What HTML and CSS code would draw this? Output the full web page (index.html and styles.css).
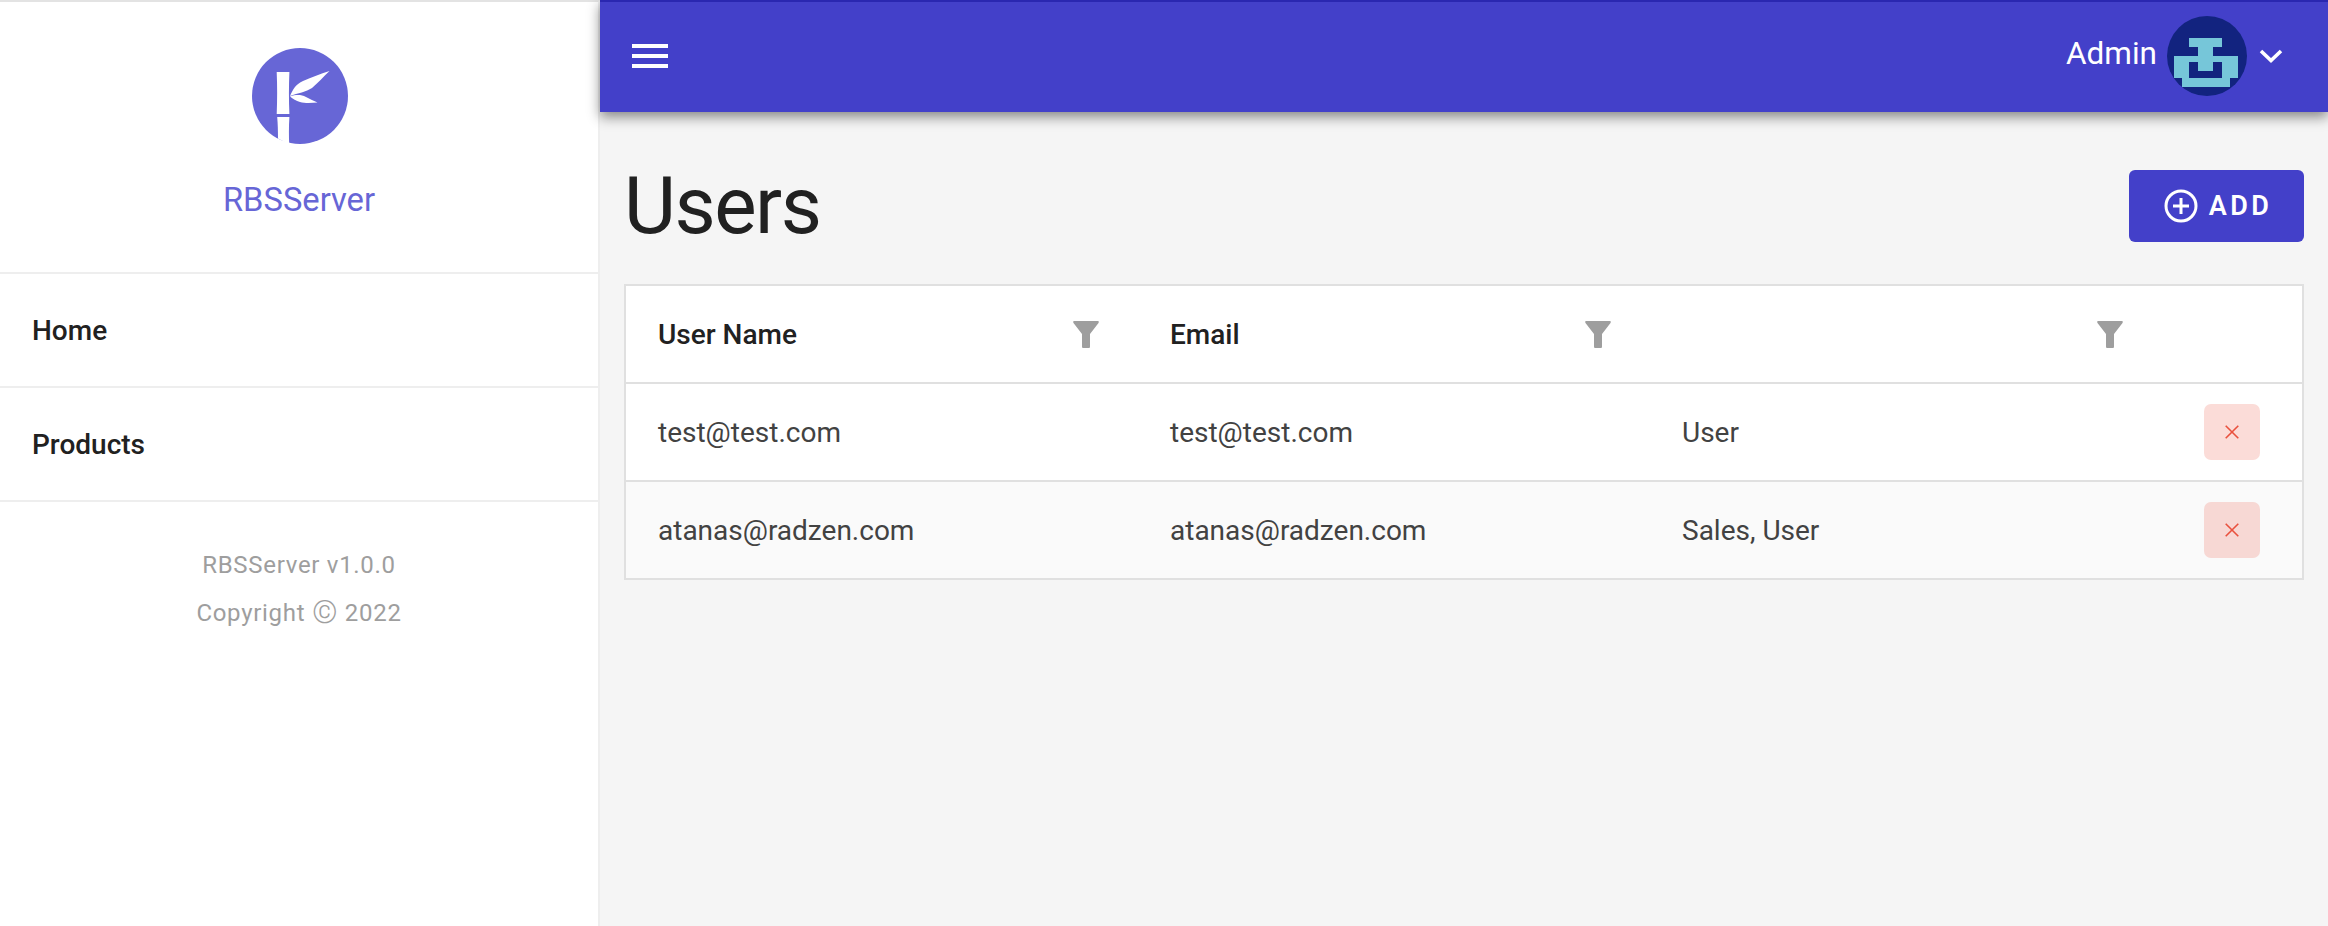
FILE: index.html
```html
<!DOCTYPE html>
<html lang="en">
<head>
    <meta charset="UTF-8">
    <meta name="viewport" content="width=device-width, initial-scale=1.0">
    <title>Users</title>
    <link rel="stylesheet" href="styles.css">
</head>
<body>
    <aside class="sidebar">
        <div class="brand">
            <svg class="brand-logo" viewBox="0 0 96 96" aria-hidden="true">
                <circle cx="48" cy="48" r="48" fill="#6766d6"/>
                <path d="M24.7 24H37.4C36.8 38 36.8 52 37.4 66H24.7C25.3 52 25.3 38 24.7 24Z" fill="#fff"/>
                <path d="M25.2 69H37.4C36.8 78 36.8 87 37.2 96.5L26 90.5C26 83 25.8 76 25.2 69Z" fill="#fff"/>
                <path d="M38 48C41 41 44 36 51 33C60 29 68 26 77.5 23C71 29 66 35 60 40C54 44 46 45 38 48Z" fill="#fff"/>
                <path d="M38 48.5C44 46.5 49 46.5 54 49C58 51 62 53 65.5 54.5C60 55 53 55.5 48 54C44 53 41 51 38 48.5Z" fill="#fff"/>
            </svg>
            <div class="brand-name">RBSServer</div>
        </div>
        <nav>
            <a class="nav-item" href="#">Home</a>
            <a class="nav-item" href="#">Products</a>
        </nav>
        <footer class="sidebar-footer">
            <p>RBSServer v1.0.0</p>
            <p>Copyright <span class="copy">&copy;</span> 2022</p>
        </footer>
    </aside>

    <div class="content">
        <header class="topbar">
            <button class="menu-button" aria-label="Toggle menu">
                <span></span><span></span><span></span>
            </button>
            <div class="profile">
                <span class="profile-name">Admin</span>
                <svg class="avatar" viewBox="0 0 80 80" aria-hidden="true">
                    <circle cx="40" cy="40" r="40" fill="#12237f"/>
                    <path d="M22 22H55V31H46V40H71V62H63V71H15V62H7V40H31V31H22Z" fill="#76c6d9"/>
                    <path d="M22 46H31V55H46V46H55V62H22Z" fill="#12237f"/>
                </svg>
                <svg class="chevron" viewBox="0 0 24 14" aria-hidden="true">
                    <path d="M2 2L12 11.5L22 2" fill="none" stroke="#fff" stroke-width="3.6"/>
                </svg>
            </div>
        </header>

        <main class="page">
            <div class="page-head">
                <h1>Users</h1>
                <button class="add-button">
                    <svg viewBox="0 0 34 34" aria-hidden="true">
                        <circle cx="17" cy="17" r="15" fill="none" stroke="#fff" stroke-width="3"/>
                        <path d="M17 9V25M9 17H25" fill="none" stroke="#fff" stroke-width="3"/>
                    </svg>
                    ADD
                </button>
            </div>

            <table class="grid">
                <thead>
                    <tr>
                        <th><div class="th-inner">User Name<svg class="filter" viewBox="0 0 26 27"><path d="M1 0H25C26 0 26 1 25.5 2L17 13V25.5C17 26.5 16.5 27 15.5 27H10.5C9.5 27 9 26.5 9 25.5V13L.5 2C0 1 0 0 1 0Z"/></svg></div></th>
                        <th><div class="th-inner">Email<svg class="filter" viewBox="0 0 26 27"><path d="M1 0H25C26 0 26 1 25.5 2L17 13V25.5C17 26.5 16.5 27 15.5 27H10.5C9.5 27 9 26.5 9 25.5V13L.5 2C0 1 0 0 1 0Z"/></svg></div></th>
                        <th><div class="th-inner"><svg class="filter" viewBox="0 0 26 27"><path d="M1 0H25C26 0 26 1 25.5 2L17 13V25.5C17 26.5 16.5 27 15.5 27H10.5C9.5 27 9 26.5 9 25.5V13L.5 2C0 1 0 0 1 0Z"/></svg></div></th>
                        <th></th>
                    </tr>
                </thead>
                <tbody>
                    <tr>
                        <td>test@test.com</td>
                        <td>test@test.com</td>
                        <td>User</td>
                        <td class="actions">
                            <button class="delete-button" aria-label="Delete">
                                <svg viewBox="0 0 14 14"><path d="M.7 .7L13.3 13.3M13.3 .7L.7 13.3"/></svg>
                            </button>
                        </td>
                    </tr>
                    <tr class="alt">
                        <td>atanas@radzen.com</td>
                        <td>atanas@radzen.com</td>
                        <td>Sales, User</td>
                        <td class="actions">
                            <button class="delete-button" aria-label="Delete">
                                <svg viewBox="0 0 14 14"><path d="M.7 .7L13.3 13.3M13.3 .7L.7 13.3"/></svg>
                            </button>
                        </td>
                    </tr>
                </tbody>
            </table>
        </main>
    </div>
</body>
</html>
```
FILE: styles.css
```css
* {
    box-sizing: border-box;
}
body {
    margin: 0;
    height: 926px;
    display: flex;
    overflow: hidden;
    font-family: Roboto, "Liberation Sans", sans-serif;
    background-color: #f5f5f5;
    color: #212121;
}
.sidebar {
    width: 600px;
    flex-shrink: 0;
    background-color: #fff;
    border-top: 2px solid #e3e3e3;
    border-right: 2px solid #eeeeee;
}
.brand {
    height: 272px;
    padding-top: 46px;
    display: flex;
    flex-direction: column;
    align-items: center;
    border-bottom: 2px solid #eeeeee;
}
.brand-logo {
    width: 96px;
    height: 96px;
    margin-left: 2px;
}
.brand-name {
    margin-top: 37px;
    font-size: 32.7px;
    line-height: 38px;
    color: #6766d6;
}
.nav-item {
    display: block;
    height: 114px;
    padding-left: 32px;
    line-height: 114px;
    font-size: 28px;
    font-weight: 500;
    color: #212121;
    text-decoration: none;
    border-bottom: 2px solid #eeeeee;
}
.sidebar-footer {
    padding-top: 49px;
    text-align: center;
    font-size: 24px;
    letter-spacing: 0.7px;
    color: #9e9e9e;
}
.sidebar-footer p {
    margin: 0 0 20px;
    line-height: 28px;
}
.copy {
    font-size: 32px;
    font-weight: 300;
    line-height: 0;
    vertical-align: -2px;
}
.content {
    flex: 1;
    display: flex;
    flex-direction: column;
}
.topbar {
    height: 112px;
    padding: 0 45px 2px 32px;
    display: flex;
    align-items: center;
    justify-content: space-between;
    background-color: #4340c9;
    border-top: 2px solid #2a27b0;
    box-shadow: 0 5px 12px rgba(0, 0, 0, 0.45);
    position: relative;
}
.menu-button {
    width: 36px;
    padding: 0;
    border: none;
    background: none;
    display: flex;
    flex-direction: column;
    gap: 6px;
}
.menu-button span {
    height: 4px;
    background-color: #fff;
}
.profile {
    display: flex;
    align-items: center;
    color: #fff;
}
.profile-name {
    font-size: 31.5px;
    margin-right: 10px;
    padding-bottom: 5px;
}
.avatar {
    width: 80px;
    height: 80px;
}
.chevron {
    width: 24px;
    height: 14px;
    margin-left: 12px;
}
.page {
    padding: 0 24px;
}
.page-head {
    height: 172px;
    padding-top: 16px;
    display: flex;
    align-items: center;
    justify-content: space-between;
}
h1 {
    margin: 0;
    font-size: 80px;
    font-weight: 400;
    letter-spacing: -1.5px;
}
.add-button {
    width: 175px;
    height: 72px;
    padding: 0 0 0 3px;
    display: flex;
    align-items: center;
    justify-content: center;
    gap: 11px;
    border: none;
    border-radius: 6px;
    background-color: #4340c9;
    color: #fff;
    font-family: inherit;
    font-size: 27px;
    font-weight: 600;
    letter-spacing: 3.5px;
}
.add-button svg {
    width: 34px;
    height: 34px;
}
.grid {
    width: 100%;
    table-layout: fixed;
    border-collapse: separate;
    border-spacing: 0;
    border: 2px solid #e0e0e0;
    background-color: #fff;
    font-size: 28px;
}
.grid th,
.grid td {
    height: 98px;
    padding: 0 0 0 32px;
    border-bottom: 2px solid #e0e0e0;
    text-align: left;
    vertical-align: middle;
}
.grid th:nth-child(-n+3),
.grid td:nth-child(-n+3) {
    width: 512px;
}
.grid tr:last-child td {
    height: 96px;
    border-bottom: none;
}
.grid th {
    font-weight: 500;
    color: #212121;
}
.grid td {
    color: #424242;
}
.grid .alt td {
    background-color: #fafafa;
}
.th-inner {
    display: flex;
    align-items: center;
    justify-content: space-between;
    padding-right: 39px;
}
.filter {
    width: 26px;
    height: 27px;
    margin-left: auto;
    fill: #9e9e9e;
}
.grid td.actions {
    padding: 0;
    text-align: center;
}
.delete-button {
    width: 56px;
    height: 56px;
    padding: 0;
    border: none;
    border-radius: 7px;
    background-color: rgba(233, 81, 62, 0.2);
    vertical-align: middle;
}
.delete-button svg {
    display: block;
    width: 14px;
    height: 14px;
    margin: auto;
    fill: none;
    stroke: #e9513e;
    stroke-width: 1.6;
}
```
